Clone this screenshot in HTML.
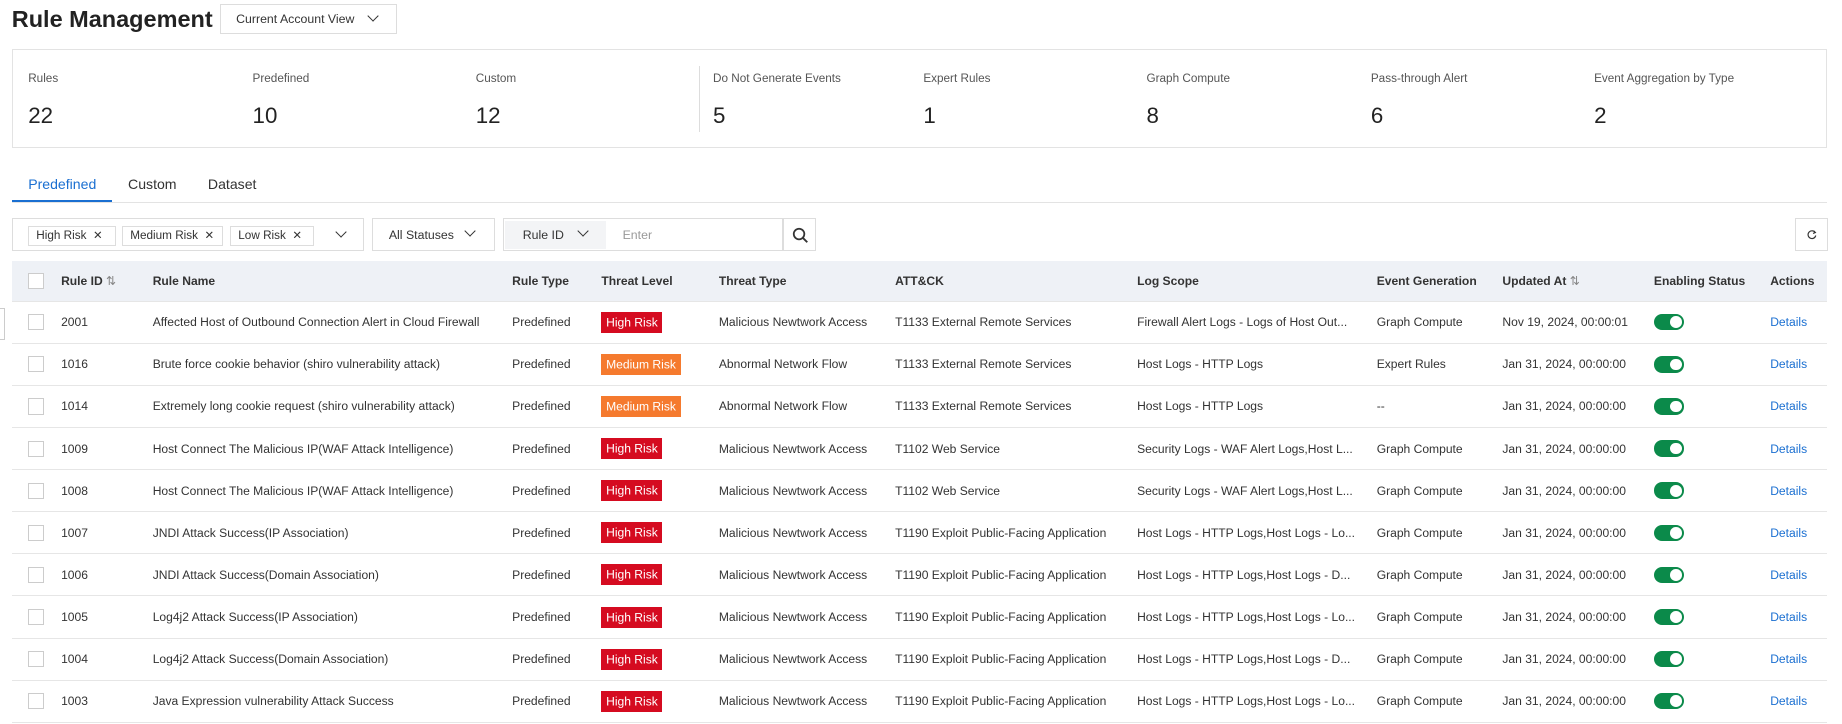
<!DOCTYPE html>
<html><head><meta charset="utf-8"><style>
html{zoom:1.1747}
body{margin:0;width:1568px;height:616px;overflow:hidden;background:#fff;font-family:"Liberation Sans",sans-serif;color:#333;font-size:10.5px;position:relative}
.a{position:absolute;white-space:nowrap}
.chev{display:inline-block;width:6px;height:6px;border-right:1.3px solid #333;border-bottom:1.3px solid #333;transform:rotate(45deg)}
.box{position:absolute;border:1px solid #ddd;box-sizing:border-box;background:#fff}
.lbl{font-size:10px;color:#555;top:61px}
.num{font-size:19px;color:#222;top:88px}
table{position:absolute;left:10px;top:222px;width:1545px;border-collapse:collapse}
td,th{height:35px;padding:0;border-bottom:1px solid #e6e6e6;text-align:left;white-space:nowrap;font-weight:normal;font-size:10.3px}
th{background:#eef1f6;height:34px;color:#333;font-weight:bold}
.cb{display:inline-block;width:12px;height:12px;border:1px solid #ccc;background:#fff;vertical-align:middle;margin-left:14px}
.hr,.mr{color:#fff;padding:3px 4px;font-size:10.3px}
.hr{background:#d50b20}.mr{background:#f57a2e}
.tg{display:inline-block;width:26px;height:14px;border-radius:7px;background:#0b8a4a;position:relative;vertical-align:middle}
.tg:after{content:"";position:absolute;right:2px;top:2px;width:10px;height:10px;border-radius:50%;background:#fff}
.d{color:#1a6fd1}
.tag{position:absolute;top:192px;height:17px;border:1px solid #ddd;box-sizing:border-box;font-size:10px;line-height:15px;padding:0 6px;white-space:nowrap;overflow:hidden}
</style></head><body>
<div class="a" style="left:10px;top:5px;font-size:20px;color:#222;font-weight:bold">Rule Management</div>
<div class="box" style="left:187px;top:3px;width:151px;height:26px"></div>
<div class="a" style="left:201px;top:10px;font-size:10.5px">Current Account View</div>
<div class="a chev" style="left:314px;top:10px"></div>

<div class="box" style="left:10px;top:42px;width:1545px;height:84px;border-color:#e3e3e3"></div>
<div class="a" style="left:595px;top:56px;width:1px;height:56px;background:#ddd"></div>
<div class="a lbl" style="left:24px">Rules</div><div class="a num" style="left:24px">22</div>
<div class="a lbl" style="left:215px">Predefined</div><div class="a num" style="left:215px">10</div>
<div class="a lbl" style="left:405px">Custom</div><div class="a num" style="left:405px">12</div>
<div class="a lbl" style="left:607px">Do Not Generate Events</div><div class="a num" style="left:607px">5</div>
<div class="a lbl" style="left:786px">Expert Rules</div><div class="a num" style="left:786px">1</div>
<div class="a lbl" style="left:976px">Graph Compute</div><div class="a num" style="left:976px">8</div>
<div class="a lbl" style="left:1167px">Pass-through Alert</div><div class="a num" style="left:1167px">6</div>
<div class="a lbl" style="left:1357px">Event Aggregation by Type</div><div class="a num" style="left:1357px">2</div>

<div class="a" style="left:24px;top:150px;font-size:12px;color:#1a6fd1">Predefined</div>
<div class="a" style="left:109px;top:150px;font-size:12px">Custom</div>
<div class="a" style="left:177px;top:150px;font-size:12px">Dataset</div>
<div class="a" style="left:10px;top:172px;width:1545px;height:1px;background:#e3e3e3"></div>
<div class="a" style="left:10px;top:170px;width:85px;height:2px;background:#1a6fd1"></div>

<div class="box" style="left:10px;top:186px;width:300px;height:28px"></div>
<div class="tag" style="left:24px;width:75px">High Risk &nbsp;✕</div>
<div class="tag" style="left:104px;width:86px">Medium Risk &nbsp;✕</div>
<div class="tag" style="left:196px;width:71px">Low Risk &nbsp;✕</div>
<div class="a chev" style="left:287px;top:194px"></div>
<div class="box" style="left:317px;top:186px;width:104px;height:28px"></div>
<div class="a" style="left:331px;top:194px">All Statuses</div>
<div class="a chev" style="left:397px;top:193px"></div>
<div class="box" style="left:428px;top:186px;width:267px;height:28px"></div>
<div class="a" style="left:430px;top:188px;width:86px;height:24px;background:#f3f4f6"></div>
<div class="a" style="left:445px;top:194px">Rule ID</div>
<div class="a chev" style="left:493px;top:193px"></div>
<div class="a" style="left:530px;top:194px;color:#999">Enter</div>
<div class="a" style="left:666px;top:186px;width:1px;height:28px;background:#ddd"></div>
<svg class="a" style="left:674px;top:193px" width="14" height="14" viewBox="0 0 14 14"><circle cx="6" cy="6" r="4.5" fill="none" stroke="#333" stroke-width="1.5"/><path d="M9.3 9.3L13 13" stroke="#333" stroke-width="1.6"/></svg>
<div class="box" style="left:1528px;top:186px;width:28px;height:28px"></div>
<svg class="a" style="left:1537px;top:195px" width="10" height="10" viewBox="0 0 10 10"><path d="M7.8 3A3.3 3.3 0 1 0 8.3 5.5" fill="none" stroke="#333" stroke-width="1"/><path d="M6.5 1.5L8 3 6 3.8" fill="none" stroke="#333" stroke-width="1"/></svg>

<table>
<colgroup><col style="width:42px"><col style="width:78px"><col style="width:306px"><col style="width:76px"><col style="width:100px"><col style="width:150px"><col style="width:206px"><col style="width:204px"><col style="width:107px"><col style="width:129px"><col style="width:99px"><col></colgroup>
<tr><th><span class="cb"></span></th><th>Rule ID <span style="font-weight:normal;color:#888">⇅</span></th><th>Rule Name</th><th>Rule Type</th><th>Threat Level</th><th>Threat Type</th><th>ATT&amp;CK</th><th>Log Scope</th><th>Event Generation</th><th>Updated At <span style="font-weight:normal;color:#888">⇅</span></th><th>Enabling Status</th><th>Actions</th></tr>
<tr><td><span class="cb"></span></td><td>2001</td><td>Affected Host of Outbound Connection Alert in Cloud Firewall</td><td>Predefined</td><td><span class="hr">High Risk</span></td><td>Malicious Newtwork Access</td><td>T1133 External Remote Services</td><td>Firewall Alert Logs - Logs of Host Out...</td><td>Graph Compute</td><td>Nov 19, 2024, 00:00:01</td><td><span class="tg"></span></td><td class="d">Details</td></tr>
<tr><td><span class="cb"></span></td><td>1016</td><td>Brute force cookie behavior (shiro vulnerability attack)</td><td>Predefined</td><td><span class="mr">Medium Risk</span></td><td>Abnormal Network Flow</td><td>T1133 External Remote Services</td><td>Host Logs - HTTP Logs</td><td>Expert Rules</td><td>Jan 31, 2024, 00:00:00</td><td><span class="tg"></span></td><td class="d">Details</td></tr>
<tr><td><span class="cb"></span></td><td>1014</td><td>Extremely long cookie request (shiro vulnerability attack)</td><td>Predefined</td><td><span class="mr">Medium Risk</span></td><td>Abnormal Network Flow</td><td>T1133 External Remote Services</td><td>Host Logs - HTTP Logs</td><td>--</td><td>Jan 31, 2024, 00:00:00</td><td><span class="tg"></span></td><td class="d">Details</td></tr>
<tr><td><span class="cb"></span></td><td>1009</td><td>Host Connect The Malicious IP(WAF Attack Intelligence)</td><td>Predefined</td><td><span class="hr">High Risk</span></td><td>Malicious Newtwork Access</td><td>T1102 Web Service</td><td>Security Logs - WAF Alert Logs,Host L...</td><td>Graph Compute</td><td>Jan 31, 2024, 00:00:00</td><td><span class="tg"></span></td><td class="d">Details</td></tr>
<tr><td><span class="cb"></span></td><td>1008</td><td>Host Connect The Malicious IP(WAF Attack Intelligence)</td><td>Predefined</td><td><span class="hr">High Risk</span></td><td>Malicious Newtwork Access</td><td>T1102 Web Service</td><td>Security Logs - WAF Alert Logs,Host L...</td><td>Graph Compute</td><td>Jan 31, 2024, 00:00:00</td><td><span class="tg"></span></td><td class="d">Details</td></tr>
<tr><td><span class="cb"></span></td><td>1007</td><td>JNDI Attack Success(IP Association)</td><td>Predefined</td><td><span class="hr">High Risk</span></td><td>Malicious Newtwork Access</td><td>T1190 Exploit Public-Facing Application</td><td>Host Logs - HTTP Logs,Host Logs - Lo...</td><td>Graph Compute</td><td>Jan 31, 2024, 00:00:00</td><td><span class="tg"></span></td><td class="d">Details</td></tr>
<tr><td><span class="cb"></span></td><td>1006</td><td>JNDI Attack Success(Domain Association)</td><td>Predefined</td><td><span class="hr">High Risk</span></td><td>Malicious Newtwork Access</td><td>T1190 Exploit Public-Facing Application</td><td>Host Logs - HTTP Logs,Host Logs - D...</td><td>Graph Compute</td><td>Jan 31, 2024, 00:00:00</td><td><span class="tg"></span></td><td class="d">Details</td></tr>
<tr><td><span class="cb"></span></td><td>1005</td><td>Log4j2 Attack Success(IP Association)</td><td>Predefined</td><td><span class="hr">High Risk</span></td><td>Malicious Newtwork Access</td><td>T1190 Exploit Public-Facing Application</td><td>Host Logs - HTTP Logs,Host Logs - Lo...</td><td>Graph Compute</td><td>Jan 31, 2024, 00:00:00</td><td><span class="tg"></span></td><td class="d">Details</td></tr>
<tr><td><span class="cb"></span></td><td>1004</td><td>Log4j2 Attack Success(Domain Association)</td><td>Predefined</td><td><span class="hr">High Risk</span></td><td>Malicious Newtwork Access</td><td>T1190 Exploit Public-Facing Application</td><td>Host Logs - HTTP Logs,Host Logs - D...</td><td>Graph Compute</td><td>Jan 31, 2024, 00:00:00</td><td><span class="tg"></span></td><td class="d">Details</td></tr>
<tr><td><span class="cb"></span></td><td>1003</td><td>Java Expression vulnerability Attack Success</td><td>Predefined</td><td><span class="hr">High Risk</span></td><td>Malicious Newtwork Access</td><td>T1190 Exploit Public-Facing Application</td><td>Host Logs - HTTP Logs,Host Logs - Lo...</td><td>Graph Compute</td><td>Jan 31, 2024, 00:00:00</td><td><span class="tg"></span></td><td class="d">Details</td></tr>
</table>
<div class="a" style="left:0;top:262px;width:3px;height:26px;border:1px solid #ccc;border-left:none;background:#fff"></div>
</body></html>
